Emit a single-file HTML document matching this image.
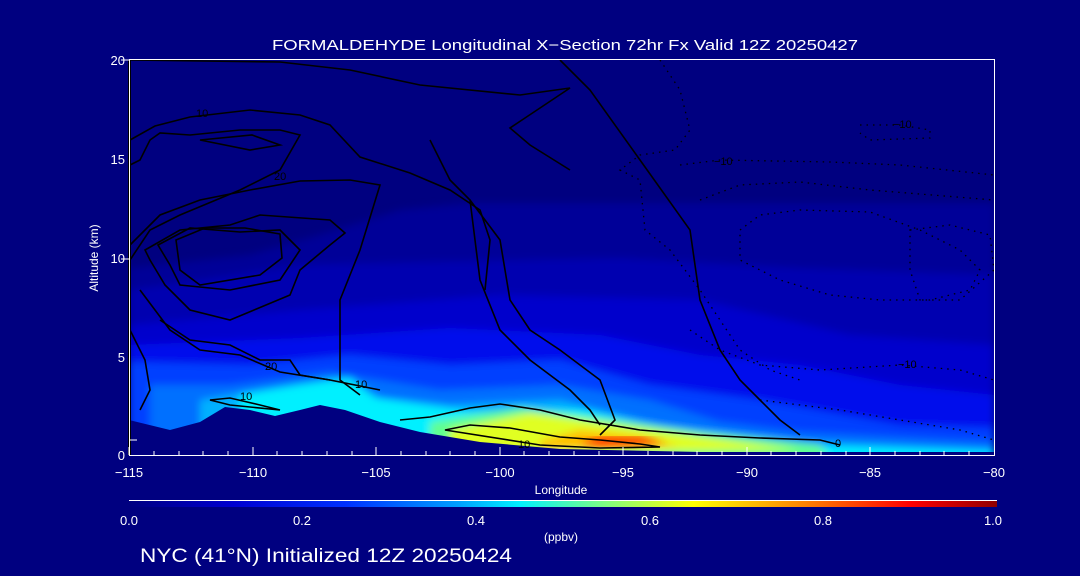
<!DOCTYPE html>
<html><head><meta charset="utf-8"><style>
html,body{margin:0;padding:0;background:#000080;width:1080px;height:576px;overflow:hidden}
svg{display:block}
text{font-family:"Liberation Sans",sans-serif;fill:#fff}
</style></head><body>
<svg width="1080" height="576" viewBox="0 0 1080 576">
<defs>
<filter id="b" x="-5%" y="-5%" width="110%" height="110%"><feGaussianBlur stdDeviation="4"/></filter>
<filter id="b2"><feGaussianBlur stdDeviation="4"/></filter>
<linearGradient id="cb" x1="0" x2="1">
<stop offset="0" stop-color="#000080"/><stop offset="0.12" stop-color="#0000d0"/><stop offset="0.25" stop-color="#0030ff"/>
<stop offset="0.38" stop-color="#00a0ff"/><stop offset="0.45" stop-color="#00f0ff"/><stop offset="0.55" stop-color="#80ff80"/>
<stop offset="0.65" stop-color="#ffff00"/><stop offset="0.78" stop-color="#ff8000"/><stop offset="0.9" stop-color="#ff0000"/><stop offset="1" stop-color="#900000"/>
</linearGradient>
<clipPath id="pc"><rect x="129" y="60" width="865" height="395"/></clipPath>
</defs>
<rect width="1080" height="576" fill="#000080"/>
<g clip-path="url(#pc)">
<g filter="url(#b)">
<path d="M129 268 L250 255 L330 232 L400 210 L470 203 L994 203 L994 470 L129 470Z" fill="#000098"/>
<path d="M129 290 L200 280 L300 265 L420 262 L620 258 L800 268 L994 275 L994 470 L129 470Z" fill="#0000b0"/>
<path d="M129 325 L300 310 L500 295 L700 300 L850 335 L994 345 L994 470 L129 470Z" fill="#0000cc"/>
<path d="M129 345 L300 338 L450 328 L600 335 L700 355 L800 365 L900 385 L994 395 L994 470 L129 470Z" fill="#0010ec"/>
<path d="M129 362 L250 365 L350 355 L450 365 L560 360 L650 385 L760 400 L900 425 L994 428 L994 470 L129 470Z" fill="#0040ff"/>
<path d="M150 385 L230 385 L330 372 L440 390 L560 385 L650 400 L720 422 L800 432 L994 442 L994 470 L150 470Z" fill="#0070ff"/>
<path d="M200 400 L260 390 L340 378 L380 398 L450 405 L560 400 L660 425 L800 442 L994 449 L994 470 L200 470Z" fill="#00b0ff"/>
<path d="M240 395 L300 385 L350 378 L375 398 L470 412 L580 410 L680 433 L820 446 L994 452 L994 470 L240 470Z" fill="#00f0ff"/>
<path d="M430 422 L520 408 L600 418 L700 432 L820 445 L830 458 L430 458Z" fill="#60ff90"/>
<path d="M450 430 L530 413 L600 423 L700 437 L800 450 L450 452Z" fill="#e0ff20"/>
<path d="M540 441 L580 430 L640 436 L680 446 L540 449Z" fill="#ffc000"/>
</g>
<path d="M580 443 L600 437 L640 437 L665 443 L600 446Z" fill="#ff3000" filter="url(#b2)"/>
<!-- terrain -->
<path d="M129 420 L170 430 L200 422 L225 407 L250 410 L275 416 L300 410 L320 405 L345 410 L380 422 L420 432 L480 442 L560 449 L700 452 L994 452 L994 460 L129 460Z" fill="#000080"/>
</g>
<!-- contours -->
<g fill="none" stroke="#000" stroke-width="1.6" clip-path="url(#pc)">
<path d="M130 60 L280 62 L350 70 L420 85 L520 95 L570 88 L552 100 L525 118 L510 128 L530 145 L570 170"/>
<path d="M130 140 L155 126 L190 117 L250 110 L300 115 L330 125 L360 157 L410 173 L450 190 L480 210 L490 240 L485 290"/>
<path d="M130 165 L140 160 L150 140 L160 133 L190 135 L240 130 L280 130 L300 135 L280 170 L240 190 L180 215 L150 230 L130 260"/>
<path d="M200 140 L252 135 L280 145 L250 150Z"/>
<path d="M130 245 L160 215 L200 200 L250 190 L300 181 L350 180 L380 185 L360 250 L340 300 L340 380 L360 395"/>
<path d="M145 250 L180 230 L230 225 L260 215 L330 220 L345 233 L330 245 L300 270 L290 295 L230 320 L190 310 L165 285 L150 260Z"/>
<path d="M158 245 L190 228 L240 232 L280 230 L300 250 L280 280 L230 290 L180 285 L170 265Z"/>
<path d="M176 240 L205 228 L245 228 L280 234 L282 258 L260 275 L200 285 L180 270 Z"/>
<path d="M130 330 L145 360 L150 390 L140 410"/>
<path d="M140 290 L170 330 L200 350 L240 355 L280 372 L330 380 L380 390"/>
<path d="M160 320 L190 340 L230 345 L260 360 L290 360 L300 375 L330 380"/>
<path d="M210 400 L230 398 L260 405 L280 410 L230 405Z"/>
<path d="M445 430 L470 425 L510 428 L560 437 L600 440 L640 444 L660 447 L600 448 L540 445Z"/>
<path d="M400 420 L430 417 L470 408 L500 404 L540 410 L580 420 L640 430 L700 435 L760 438 L820 440 L840 445"/>
<path d="M470 200 L500 240 L510 300 L530 330 L560 350 L600 380 L615 420 L600 435"/>
<path d="M560 60 L590 90 L640 160 L690 230 L700 300 L720 350 L740 380 L760 400 L780 420 L800 435"/>
<path d="M430 140 L450 180 L470 200 L480 280 L500 330 L530 360 L570 390 L590 410 L600 425"/>
</g>
<g fill="none" stroke="#000" stroke-width="1.3" stroke-dasharray="1.5 5" clip-path="url(#pc)">
<path d="M660 60 L680 90 L690 130 L675 150 L640 155 L620 170 L640 180 L645 230 L670 250 L700 290 L720 320 L740 350 L770 370 L800 380"/>
<path d="M680 165 L720 160 L830 162 L900 165 L994 175"/>
<path d="M860 125 L900 125 L930 130 L930 138 L870 140 L860 133"/>
<path d="M700 200 L740 185 L800 182 L870 190 L994 200"/>
<path d="M740 230 L760 215 L800 210 L870 212 L920 230 L960 250 L980 270 L970 290 L930 300 L880 300 L830 295 L780 280 L740 260 Z"/>
<path d="M910 230 L950 225 L990 235 L994 270 L960 300 L920 300 L910 270 Z"/>
<path d="M690 330 L720 350 L760 365 L820 370 L900 365 L960 370 L994 380"/>
<path d="M760 400 L840 410 L900 420 L960 430 L994 440"/>
</g>
<rect x="128" y="60" width="3" height="395" fill="#000"/>
<!-- axes -->
<g stroke="#fff" stroke-width="1" fill="none">
<rect x="129.5" y="59.5" width="865" height="396"/>
<path d="M129 455 v-8 M154 455 v-4 M179 455 v-4 M203 455 v-4 M228 455 v-4 M253 455 v-8 M277 455 v-4 M302 455 v-4 M327 455 v-4 M352 455 v-4 M376 455 v-8 M401 455 v-4 M426 455 v-4 M450 455 v-4 M475 455 v-4 M500 455 v-8 M524 455 v-4 M549 455 v-4 M574 455 v-4 M599 455 v-4 M623 455 v-8 M648 455 v-4 M673 455 v-4 M697 455 v-4 M722 455 v-4 M747 455 v-8 M771 455 v-4 M796 455 v-4 M821 455 v-4 M846 455 v-4 M870 455 v-8 M895 455 v-4 M920 455 v-4 M944 455 v-4 M969 455 v-4"/>
<path d="M129 440 h8 M129 259 h-8 M129 60 h-8"/>
</g>
<g font-size="13">
<text x="272" y="50" font-size="15" textLength="586" lengthAdjust="spacingAndGlyphs">FORMALDEHYDE Longitudinal X−Section 72hr  Fx Valid 12Z 20250427</text>
<text x="125" y="65" text-anchor="end">20</text>
<text x="125" y="164" text-anchor="end">15</text>
<text x="125" y="263" text-anchor="end">10</text>
<text x="125" y="362" text-anchor="end">5</text>
<text x="125" y="460" text-anchor="end">0</text>
<text x="129" y="477" text-anchor="middle">−115</text>
<text x="253" y="477" text-anchor="middle">−110</text>
<text x="376" y="477" text-anchor="middle">−105</text>
<text x="500" y="477" text-anchor="middle">−100</text>
<text x="623" y="477" text-anchor="middle">−95</text>
<text x="747" y="477" text-anchor="middle">−90</text>
<text x="870" y="477" text-anchor="middle">−85</text>
<text x="994" y="477" text-anchor="middle">−80</text>
<text x="561" y="494" text-anchor="middle" font-size="12">Longitude</text>
<text transform="translate(98 258) rotate(-90)" text-anchor="middle" font-size="12">Altitude (km)</text>
<text x="129" y="525" text-anchor="middle">0.0</text>
<text x="302" y="525" text-anchor="middle">0.2</text>
<text x="476" y="525" text-anchor="middle">0.4</text>
<text x="650" y="525" text-anchor="middle">0.6</text>
<text x="823" y="525" text-anchor="middle">0.8</text>
<text x="993" y="525" text-anchor="middle">1.0</text>
<text x="561" y="541" text-anchor="middle" font-size="12">(ppbv)</text>
<text x="140" y="562" font-size="19" textLength="372" lengthAdjust="spacingAndGlyphs">NYC (41°N) Initialized 12Z 20250424</text>
</g>
<g font-size="11" style="fill:#000">
<text x="196" y="117" style="fill:#000">10</text>
<text x="274" y="180" style="fill:#000">20</text>
<text x="265" y="370" style="fill:#000">20</text>
<text x="240" y="400" style="fill:#000">10</text>
<text x="355" y="388" style="fill:#000">10</text>
<text x="518" y="448" style="fill:#000">10</text>
<text x="835" y="447" style="fill:#000">0</text>
<text x="714" y="165" style="fill:#000">−10</text>
<text x="893" y="128" style="fill:#000">−10</text>
<text x="898" y="368" style="fill:#000">−10</text>
</g>
<rect x="129" y="500" width="868" height="1" fill="#fff"/>
<rect x="129" y="501" width="868" height="6" fill="url(#cb)"/>
</svg>
</body></html>
